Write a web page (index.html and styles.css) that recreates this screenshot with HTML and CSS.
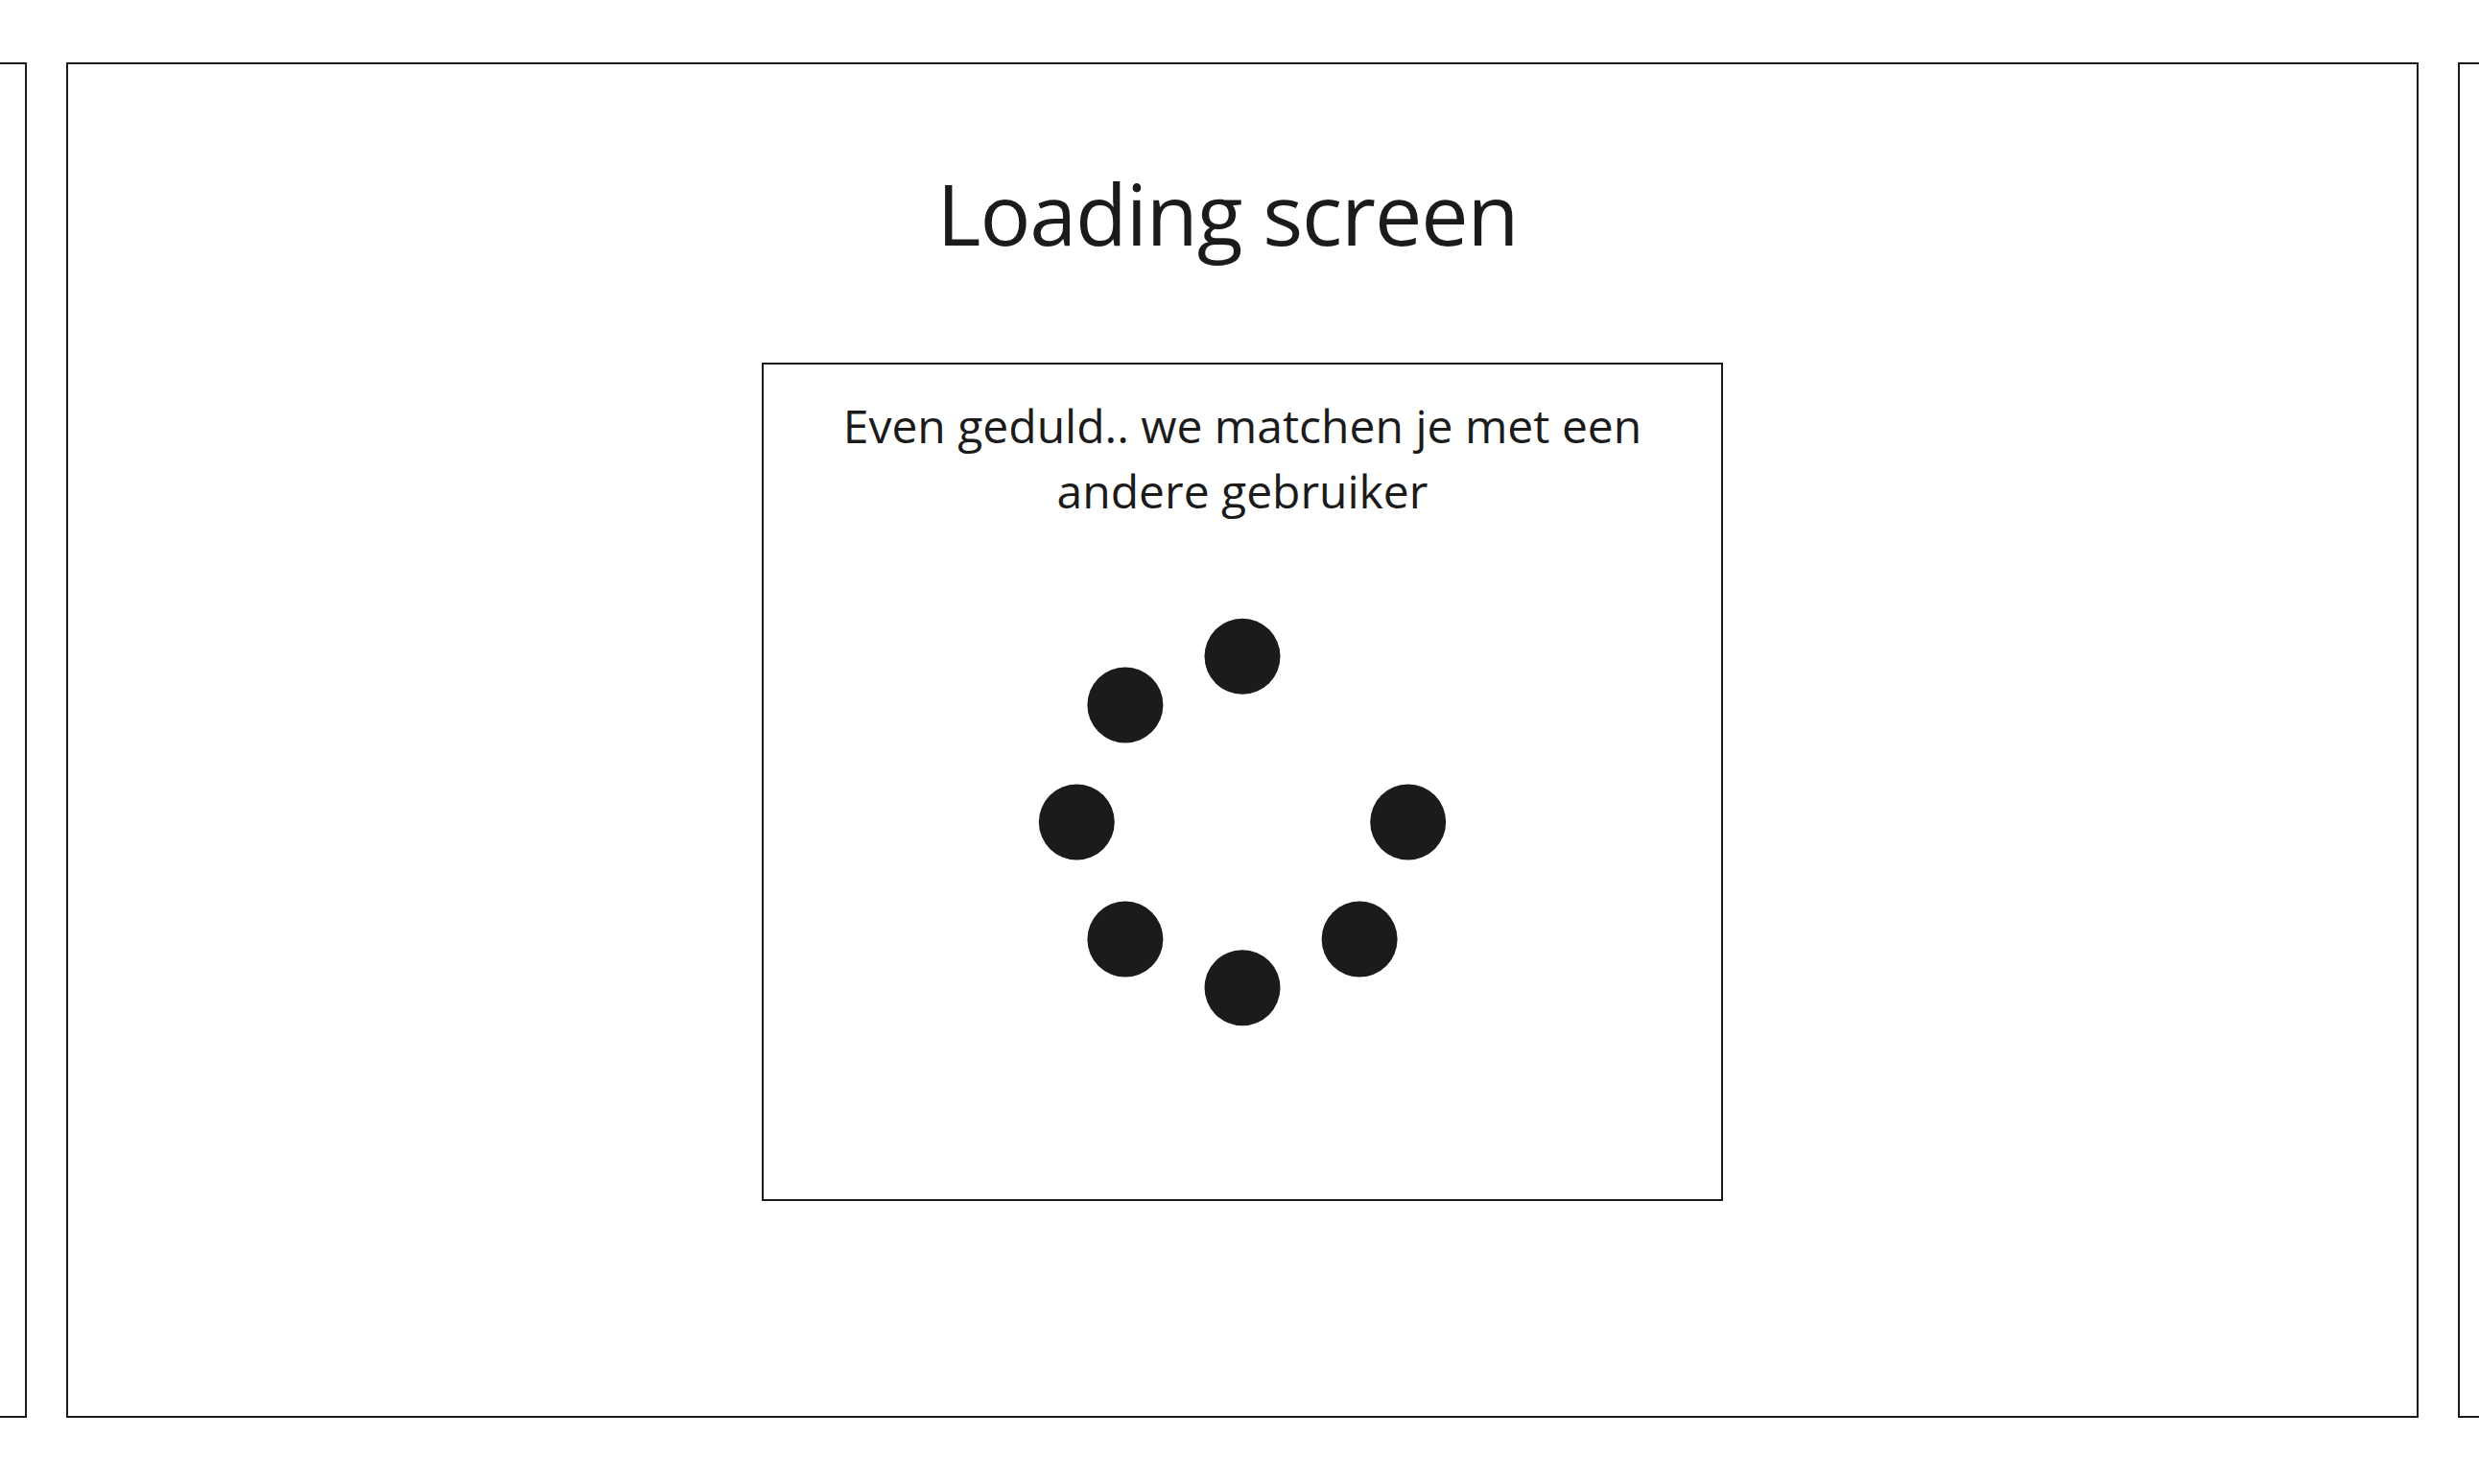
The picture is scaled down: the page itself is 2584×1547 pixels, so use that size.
FILE: index.html
```html
<!DOCTYPE html>
<html lang="nl">
<head>
<meta charset="utf-8">
<title>Loading screen</title>
<link rel="stylesheet" href="styles.css">
</head>
<body>
<div class="viewport">
  <div class="strip">
    <section class="panel"></section>
    <section class="panel panel-main">
      <h1 class="title">Loading screen</h1>
      <div class="card">
        <p class="message">Even geduld.. we matchen je met een andere gebruiker</p>
        <svg class="spinner" width="430" height="430" viewBox="0 0 430 430" aria-hidden="true">
          <g fill="#1b1b1b">
            <circle cx="215" cy="42.3" r="39.5"/>
            <circle cx="92.9" cy="92.9" r="39.5"/>
            <circle cx="42.3" cy="215" r="39.5"/>
            <circle cx="387.7" cy="215" r="39.5"/>
            <circle cx="92.9" cy="337.1" r="39.5"/>
            <circle cx="215" cy="387.7" r="39.5"/>
            <circle cx="337.1" cy="337.1" r="39.5"/>
          </g>
        </svg>
      </div>
    </section>
    <section class="panel"></section>
  </div>
</div>
</body>
</html>
```
FILE: styles.css
```css
html, body {
  margin: 0;
  padding: 0;
  background: #ffffff;
}

body {
  font-family: "Open Sans", "Noto Sans", sans-serif;
  color: #1b1b1b;
}

.viewport {
  width: 2584px;
  height: 1547px;
  overflow: hidden;
}

.strip {
  display: flex;
  gap: 41px;
  margin-left: -2424px;
  padding-top: 65px;
}

.panel {
  flex: 0 0 2452px;
  height: 1413px;
  box-sizing: border-box;
  border: 2px solid #1b1b1b;
}

.panel-main {
  display: flex;
  flex-direction: column;
  align-items: center;
  padding-top: 95px;
}

.title {
  margin: 0 31px 0 0;
  font-size: 88px;
  font-weight: 400;
  line-height: 120px;
  letter-spacing: -1.1px;
}

.card {
  margin-top: 96px;
  width: 1002px;
  height: 874px;
  box-sizing: border-box;
  border: 2px solid #1b1b1b;
  display: flex;
  flex-direction: column;
  align-items: center;
  padding-top: 30px;
}

.message {
  margin: 0;
  max-width: 880px;
  font-size: 48px;
  line-height: 68px;
  text-align: center;
}

.spinner {
  display: block;
  margin-top: 96px;
}
```
